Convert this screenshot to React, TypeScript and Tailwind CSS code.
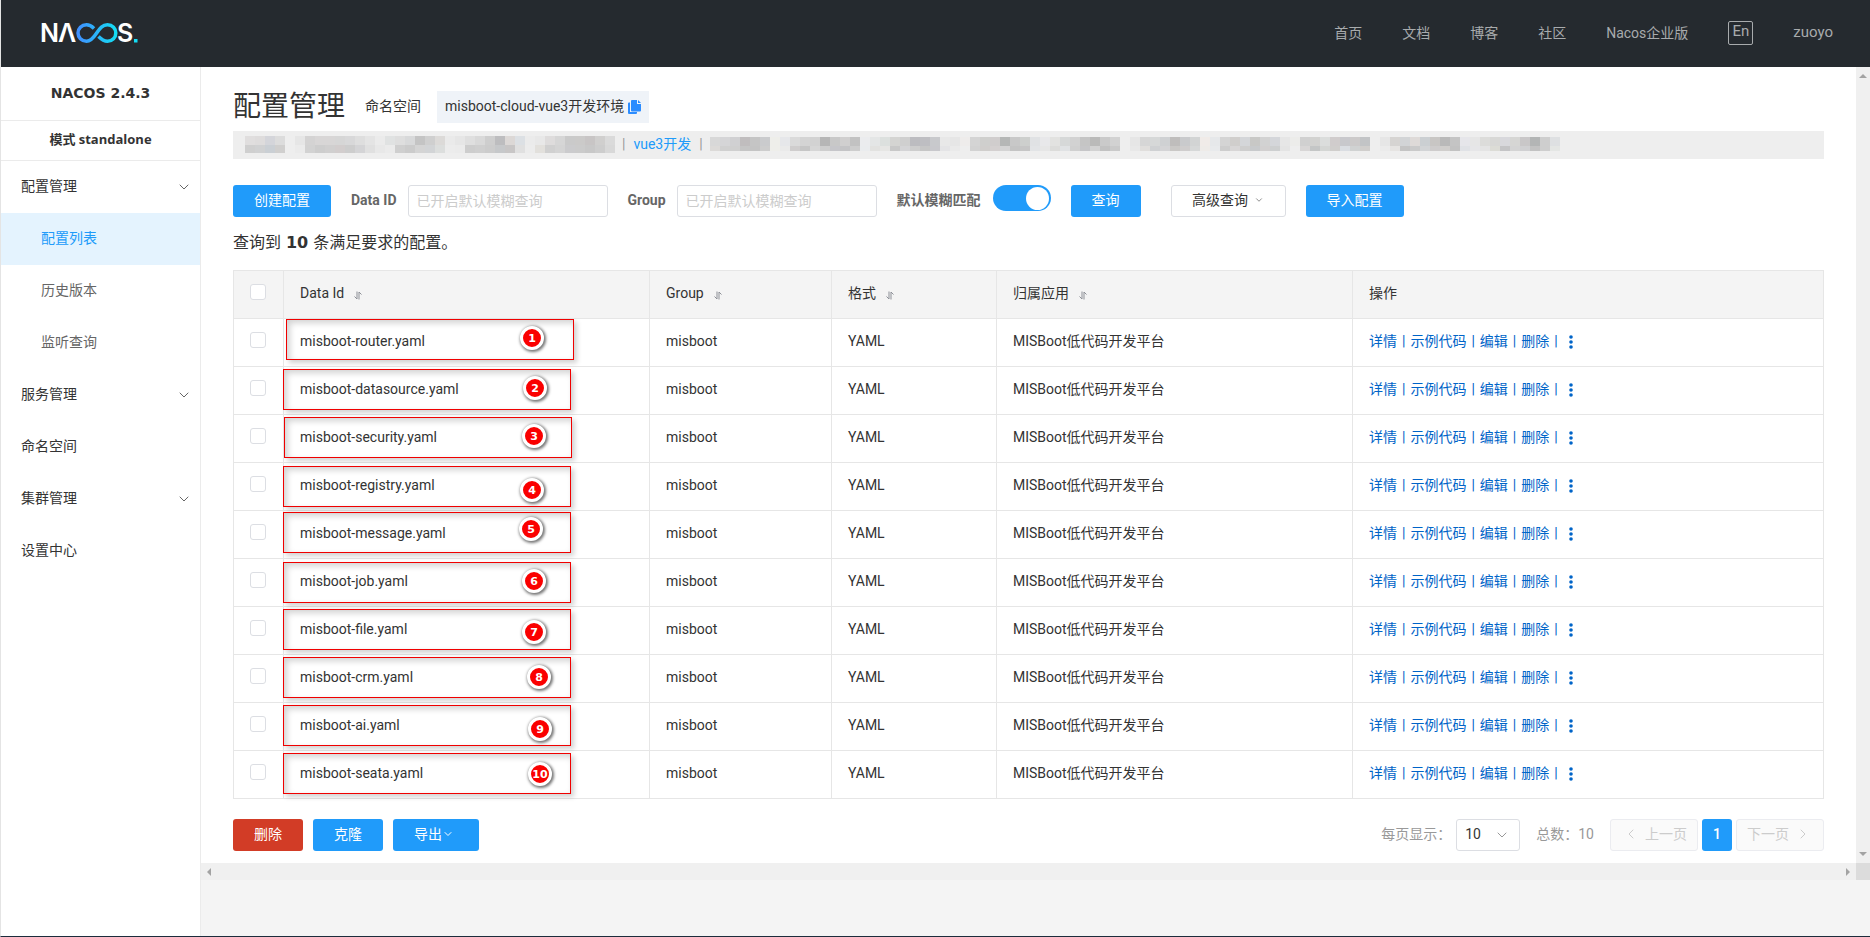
import { ChevronDown, ChevronLeft, ChevronRight } from "lucide-react";

const navLinks = ["首页", "文档", "博客", "社区", "Nacos企业版"];

type MenuItem = { label: string; expandable?: boolean; child?: boolean; active?: boolean };

const menu: MenuItem[] = [
  { label: "配置管理", expandable: true },
  { label: "配置列表", child: true, active: true },
  { label: "历史版本", child: true },
  { label: "监听查询", child: true },
  { label: "服务管理", expandable: true },
  { label: "命名空间" },
  { label: "集群管理", expandable: true },
  { label: "设置中心" },
];

const configs = [
  "misboot-router.yaml",
  "misboot-datasource.yaml",
  "misboot-security.yaml",
  "misboot-registry.yaml",
  "misboot-message.yaml",
  "misboot-job.yaml",
  "misboot-file.yaml",
  "misboot-crm.yaml",
  "misboot-ai.yaml",
  "misboot-seata.yaml",
];

// Callouts laid over the table: frame corner and badge centre, from the table's corner.
const callouts = [
  { x: 53, y: 49, bx: 299, by: 68 },
  { x: 50, y: 99, bx: 302, by: 118 },
  { x: 51, y: 147, bx: 301, by: 166 },
  { x: 50, y: 196, bx: 299, by: 220 },
  { x: 50, y: 242, bx: 298, by: 259 },
  { x: 50, y: 292, bx: 301, by: 311 },
  { x: 50, y: 339, bx: 301, by: 362 },
  { x: 50, y: 387, bx: 306, by: 407 },
  { x: 50, y: 435, bx: 307, by: 459 },
  { x: 50, y: 483, bx: 307, by: 504 },
];

const hiddenBefore = [
  "e0dede dedcdc d4d5da dcdcdc eeeeee e6e6e6 d4d3d3 d8d6d6 d8d6d6 d6d6d6 d8d8d9 dedede e4e4e4 ebebeb e0e2e2 dedede d8d9da c4c4c4 cfcfcf dcdad8 eaeaea e6e6e6 dfdfdf d9d9d9 cecece bdbdbf dcd8d6 dce0e4 ebebeb e8e8e8 dedcdc d6d6d6 cacaca cbcac9 c8c5c5 d0cfce dadada",
  "cfcfcf d0d1d2 cacfd4 d0cfce eeeeee ebebeb d2d2d2 cdcdcd d0cfcf d2cdcd cdcdcd d4d4d6 e0e0e0 e8e8e8 ebebeb cfcfcf cbcbcb d4d4d4 d2d4d6 dcdedd ececec ebebeb cdcdcd cfcfcf cccccc c6c8ca c8c6c6 e0e0e0 ececec e2e0dc d0d0d0 d4d4d4 cbcbcd cbcbcb c8c8c8 cdcdcd d8d8d8",
];

const hiddenAfter = [
  "d8d8d8 d5d5d7 d0d0d2 c0bdbe c5c5c5 cacbcd eeeeea e6e7ea dadada d4d4d4 d2d2d2 b6b6b6 c8c8c8 d0cfcf c2c2c2 ebecee e4e6e6 dce0de d4d4d2 cfcfcf bcbcc0 bebec2 c8c9cc e8e8e8 e6e6e6 eeeceb d4d4d4 cfcfcd d0cdcd b5b7b6 c8c8c8 cdcfcd e0e2e4 e8e8ea e2e2e0 d6d8d8 d2d2d2 c5c5c5 babab9 cacaca d2d2d2 eeeeee e6e6e6 d6d6d6 d6d8d8 cfd1d3 bfbdbc c9cacc d2d4d4 f0ebe8 e6e8ea d4d4d4 d0cecc d4d6d9 c8c8c6 d2d2d2 d4d6da e6e6e6 ececea d0d0d0 d2d2d0 dbdddc d0cccc c8c8cc cccaca c2c4c6 eeeeee e6e6e6 d6d4d2 d2d4d6 dedad8 cbcfd2 c8c6c4 b9b9b9 c4c4c4 e6e6ea e6e6e6 dcdcda d8d8d6 d8d8dc d6d6d4 c9c7c8 b3b5b5 cecece dee0e2",
  "dcdad8 d0d0d0 cfcfcf c5c5c5 c4c4c4 cdcdcd eeeeea eaeaea cfcdcd c6c6c6 d6d6d6 cecece c6c6ca c4c4c6 cdcdcd eaecee e2e2e0 e6e6e4 c8c8c8 d4d4d6 cdcdcd c6c6c6 c8c8cc e4e4e6 eaeaea eeeeee d2d2d2 d0cecc d4d0d0 d4d4d4 c4c4c4 c6c6c6 e2e4e6 e6e6e6 dcdcda e0e2e4 d0d0d0 c6c6c8 d2d2d2 c2c2c2 cacaca eeeeee e8e8e8 e0dedc cfd1d3 d4d4d6 cac8c6 cfcdcd d6d8d8 eeebe8 e8eaec cdcdcd d8d6d6 cecece c8cacc d2d0d0 cdcfd0 e4e4e4 eeeeee d8d6d6 c4c6c6 d4d6d4 d0cecc dadde2 d0d2d2 d0cecc eeeeee ebebeb e6e4e2 c4c4c4 cacaca d2d4d6 cecccc d0cecc c2c2c2 e0e2e6 e6e6e8 e4e4e4 dcdcd6 c4c4c6 d4d4d4 d0d0d2 c2c2c2 cecece e4e6e4",
];

function Mosaic({ rows, top, bottom }: { rows: string[]; top: number; bottom: number }) {
  const cells = rows.map((r) => r.split(" "));
  const width = cells[0].length * 10;
  const height = top + bottom;
  return (
    <svg width={width} height={height} viewBox={`0 0 ${width} ${height}`} shapeRendering="crispEdges" className="shrink-0" aria-hidden="true">
      {cells.map((row, r) =>
        row.map((c, i) => (
          <rect key={`${r}-${i}`} x={i * 10} y={r ? top : 0} width="10" height={r ? bottom : top} fill={`#${c}`} />
        ))
      )}
    </svg>
  );
}

function Logo() {
  return (
    <svg width="104" height="40" viewBox="-4 -7 104 40" role="img" aria-label="NACOS">
      <defs>
        <linearGradient id="loop" x1="0" x2="1" y1="0" y2="0">
          <stop offset="0" stopColor="#4090ff" />
          <stop offset="1" stopColor="#14dcf4" />
        </linearGradient>
      </defs>
      <g fill="#fff" fontFamily="Inter, sans-serif" fontWeight="600" fontSize="25">
        <text x="-1" y="22">N</text>
        <text x="17" y="22">Λ</text>
        <text x="76" y="22">S</text>
      </g>
      <path
        d="M53 8.500C50.500 6 48.500 4.800 45.500 4.800C40.500 4.800 37 8.500 37 13C37 17.500 40.500 21.200 45.500 21.200C49.500 21.200 52 18.500 55.500 13.200C59 8 61.500 4.800 66.500 4.800C71.500 4.800 74.800 8.500 74.800 13C74.800 17.500 71.500 21.200 66.500 21.200C63 21.200 60.500 19.500 57.500 16.500"
        fill="none"
        stroke="url(#loop)"
        strokeWidth="3.500"
      />
      <rect x="93" y="19" width="3.500" height="3.500" fill="#14dcf4" />
    </svg>
  );
}

function SortIcon() {
  return (
    <svg width="8" height="9" viewBox="0 0 8 9" fill="none" stroke="#8c8f96" aria-hidden="true">
      <path d="M3 0.500V8L0.500 5.500M5 8.500V1L7.500 3.500" />
    </svg>
  );
}

function CopyIcon() {
  return (
    <svg width="13" height="14" viewBox="0 0 13 14" aria-hidden="true">
      <path d="M4 0h5v4h4v6.500a1 1 0 0 1-1 1H4a1 1 0 0 1-1-1V1a1 1 0 0 1 1-1Z" fill="#2b8cff" />
      <path d="M10 0l3 3h-3Z" fill="#2b8cff" />
      <path d="M0 3.500a1 1 0 0 1 1-1h1v9.500h7v1a1 1 0 0 1-1 1H1a1 1 0 0 1-1-1Z" fill="#2b8cff" />
    </svg>
  );
}

function Check({ label }: { label: string }) {
  return (
    <input
      type="checkbox"
      aria-label={label}
      className="block size-4 appearance-none rounded-[3px] border border-[#dcdee3] bg-white"
    />
  );
}

function Th({ children }: { children: string }) {
  return (
    <th className="border-r border-b border-[#e6e6e6] px-4 pb-[3px] text-left font-normal">
      <span className="flex items-center gap-[10px]">
        {children}
        <button type="button" aria-label={`${children} 排序`} className="mt-1">
          <SortIcon />
        </button>
      </span>
    </th>
  );
}

function Actions() {
  return (
    <div className="flex items-center gap-[5px] text-[#0064c8]">
      {["详情", "示例代码", "编辑", "删除"].map((a) => (
        <span key={a} className="flex items-center gap-[5px]">
          <a href="#">{a}</a>
          <span>|</span>
        </span>
      ))}
      <button type="button" aria-label="更多" className="mt-[2px] ml-[6px]">
        <svg width="4" height="14" viewBox="0 0 4 14" fill="#0064c8" aria-hidden="true">
          <circle cx="2" cy="2" r="1.800" />
          <circle cx="2" cy="7" r="1.800" />
          <circle cx="2" cy="12" r="1.800" />
        </svg>
      </button>
    </div>
  );
}

const primary = "h-8 rounded-[3px] bg-[#209bfa] pb-[2px] text-white";
const field = "h-8 w-[200px] rounded-[3px] border border-[#dcdee3] px-2 placeholder:text-[#ccc] outline-none";

export default function App() {
  return (
    <div className="flex min-h-screen flex-col border-b border-l border-b-[#1c2c3c] border-l-[#e4e4e4] bg-[#f4f4f4] font-[Roboto,'Noto_Sans_CJK_SC',sans-serif] text-sm text-[#333]">
      <header className="flex h-[67px] items-center justify-between bg-[#252a2f] pr-[37px] pb-[2px] pl-9 text-[#a8abad]">
        <a href="#">
          <Logo />
        </a>
        <nav className="flex items-center gap-10">
          {navLinks.map((l) => (
            <a key={l} href="#">
              {l}
            </a>
          ))}
          <button type="button" className="flex h-6 w-[25px] items-center justify-center rounded-xs border border-[#a8abad] pb-[2px] text-[15px]">
            En
          </button>
          <a href="#" className="text-[15px]">
            zuoyo
          </a>
        </nav>
      </header>

      <div className="flex flex-1">
        <aside className="w-[200px] shrink-0 border-r border-[#ebebeb] bg-white">
          <h3 className="flex h-[54px] items-center justify-center border-b border-[#ebebeb] pb-[2px] font-['DejaVu_Sans','Noto_Sans_CJK_SC',sans-serif] text-sm font-bold">
            NACOS 2.4.3
          </h3>
          <h3 className="flex h-10 items-center justify-center border-b border-[#ebebeb] pb-[2px] font-['Open_Sans','Noto_Sans_CJK_SC',sans-serif] text-[13px] font-bold">
            模式 standalone
          </h3>
          <ul>
            {menu.map((m) => (
              <li key={m.label}>
                <a
                  href="#"
                  className={
                    m.active
                      ? "flex h-[52px] items-center bg-[#e4f3fe] pb-[2px] pl-10 text-[#209bfa]"
                      : m.child
                        ? "flex h-[52px] items-center pb-[2px] pl-10 text-[#666]"
                        : "flex h-[52px] items-center justify-between pr-2 pb-[2px] pl-5"
                  }
                >
                  {m.label}
                  {m.expandable && <ChevronDown size={16} strokeWidth={1.5} className="mt-[2px] text-[#666]" />}
                </a>
              </li>
            ))}
          </ul>
        </aside>

        <div className="flex min-w-0 flex-1 flex-col">
          <div className="flex">
            <main className="min-w-0 flex-1 bg-white px-8 pt-6 pb-3">
              <div className="flex h-8 items-center">
                <h1 className="text-[28px] leading-8">配置管理</h1>
                <span className="ml-5 pb-[2px]">命名空间</span>
                <span className="ml-4 flex h-8 items-center gap-1 bg-[#eff3f8] px-2 pb-[2px]">
                  misboot-cloud-vue3开发环境
                  <button type="button" aria-label="复制" className="mt-[2px]">
                    <CopyIcon />
                  </button>
                </span>
              </div>

              <div className="mt-2 flex h-7 items-center overflow-hidden bg-[#eee] pb-[2px] pl-3">
                <Mosaic rows={hiddenBefore} top={9} bottom={8} />
                <span className="ml-[7px] text-[#999]">|</span>
                <a href="#" className="mx-2 whitespace-nowrap text-[#209bfa]">
                  vue3开发
                </a>
                <span className="mr-[7px] text-[#999]">|</span>
                <Mosaic rows={hiddenAfter} top={9} bottom={5} />
              </div>

              <form className="mt-[26px] flex items-center gap-5" onSubmit={(e) => e.preventDefault()}>
                <button type="button" className={`${primary} w-[98px]`}>
                  创建配置
                </button>
                <div className="flex items-center gap-[11px]">
                  <label htmlFor="dataId" className="pb-[2px] font-bold text-[#666]">
                    Data ID
                  </label>
                  <input id="dataId" placeholder="已开启默认模糊查询" className={field} />
                </div>
                <div className="flex items-center gap-[11px]">
                  <label htmlFor="group" className="pb-[2px] font-bold text-[#666]">
                    Group
                  </label>
                  <input id="group" placeholder="已开启默认模糊查询" className={field} />
                </div>
                <div className="flex h-8 gap-3">
                  <label htmlFor="fuzzy" className="self-center pb-[2px] font-bold text-[#666]">
                    默认模糊匹配
                  </label>
                  <input
                    id="fuzzy"
                    type="checkbox"
                    role="switch"
                    defaultChecked
                    className="flex h-[26px] w-[58px] appearance-none items-center rounded-full bg-[#ccc] px-[2px] before:block before:size-[23px] before:rounded-full before:bg-white checked:justify-end checked:bg-[#209bfa]"
                  />
                </div>
                <button type="submit" className={`${primary} w-[70px]`}>
                  查询
                </button>
                <button type="button" className="ml-[10px] flex h-8 w-[115px] items-center justify-center gap-[6px] rounded-[3px] border border-[#dcdee3] pb-[2px]">
                  高级查询
                  <ChevronDown size={10} strokeWidth={2} className="text-[#777]" />
                </button>
                <button type="button" className={`${primary} w-[98px]`}>
                  导入配置
                </button>
              </form>

              <p className="mt-[14px] text-base leading-6">
                查询到 <strong className="px-px font-['DejaVu_Sans',sans-serif] text-base font-bold">10</strong> 条满足要求的配置。
              </p>

              <div className="relative mt-[15px]">
                <table className="w-full table-fixed border-separate border-spacing-0 border-t border-l border-[#e6e6e6]">
                  <colgroup>
                    <col className="w-[50px]" />
                    <col className="w-[366px]" />
                    <col className="w-[182px]" />
                    <col className="w-[165px]" />
                    <col className="w-[356px]" />
                    <col />
                  </colgroup>
                  <thead>
                    <tr className="h-12 bg-[#f4f4f4]">
                      <th className="border-r border-b border-[#e6e6e6] pb-[6px] pl-4">
                        <Check label="全选" />
                      </th>
                      <Th>Data Id</Th>
                      <Th>Group</Th>
                      <Th>格式</Th>
                      <Th>归属应用</Th>
                      <th className="border-r border-b border-[#e6e6e6] px-4 pb-[3px] text-left font-normal">操作</th>
                    </tr>
                  </thead>
                  <tbody>
                    {configs.map((name) => (
                      <tr key={name} className="h-12">
                        <td className="border-r border-b border-[#e6e6e6] px-4 pb-[6px]">
                          <Check label={name} />
                        </td>
                        <td className="border-r border-b border-[#e6e6e6] px-4 pb-[3px]">{name}</td>
                        <td className="border-r border-b border-[#e6e6e6] px-4 pb-[3px]">misboot</td>
                        <td className="border-r border-b border-[#e6e6e6] px-4 pb-[3px]">YAML</td>
                        <td className="border-r border-b border-[#e6e6e6] px-4 pb-[3px]">MISBoot低代码开发平台</td>
                        <td className="border-r border-b border-[#e6e6e6] px-4 pb-[3px]">
                          <Actions />
                        </td>
                      </tr>
                    ))}
                  </tbody>
                </table>
                {callouts.map((c, i) => (
                  <div key={i} className="pointer-events-none">
                    <div
                      className="absolute h-[41px] w-[288px] border border-[#f00000] shadow-[3px_3px_5px_rgba(0,0,0,0.18),inset_3px_3px_6px_rgba(0,0,0,0.18)]"
                      style={{ left: c.x, top: c.y }}
                    />
                    <span
                      className="absolute flex size-6 -translate-1/2 items-center justify-center rounded-full border-[3px] border-white bg-[#fa0000] font-['DejaVu_Sans',sans-serif] text-[11px] leading-none font-bold text-white shadow-[1px_1px_3px_1px_rgba(0,0,0,0.55)]"
                      style={{ left: c.bx, top: c.by }}
                    >
                      {i + 1}
                    </span>
                  </div>
                ))}
              </div>

              <div className="mt-5 flex items-center justify-between">
                <div className="flex gap-[10px]">
                  <button type="button" className="h-8 w-[70px] rounded-[3px] bg-[#d23c26] pb-[2px] text-white">
                    删除
                  </button>
                  <button type="button" className={`${primary} w-[70px]`}>
                    克隆
                  </button>
                  <button type="button" className={`${primary} flex w-[86px] items-center pl-[21px]`}>
                    导出
                    <ChevronDown size={12} strokeWidth={2} />
                  </button>
                </div>
                <div className="flex items-center text-[#999]">
                  <label htmlFor="pageSize" className="pb-[2px]">
                    每页显示：
                  </label>
                  <span className="relative ml-[5px]">
                    <select id="pageSize" className="block h-8 w-16 appearance-none rounded-[3px] border border-[#dcdee3] bg-white px-2 pb-[2px] text-[#333]">
                      <option>10</option>
                      <option>20</option>
                      <option>50</option>
                    </select>
                    <ChevronDown size={16} strokeWidth={1.5} className="pointer-events-none absolute top-2 right-[10px]" />
                  </span>
                  <span className="mr-4 ml-4 pb-[2px]">总数：10</span>
                  <div className="flex gap-1">
                    <button type="button" disabled className="flex h-8 w-[88px] items-center justify-center gap-[6px] rounded-[3px] border border-[#ebecf0] bg-[#fafafa] pb-[2px] pl-[2px] text-[#ccc]">
                      <ChevronLeft size={16} strokeWidth={1.5} />
                      上一页
                    </button>
                    <button type="button" className={`${primary} w-[30px] font-medium`}>
                      1
                    </button>
                    <button type="button" disabled className="flex h-8 w-[88px] items-center justify-center gap-[6px] rounded-[3px] border border-[#ebecf0] bg-[#fafafa] pr-[2px] pb-[2px] text-[#ccc]">
                      下一页
                      <ChevronRight size={16} strokeWidth={1.5} />
                    </button>
                  </div>
                </div>
              </div>
            </main>
            <div className="flex w-[14px] flex-col items-center justify-between bg-[#f0f0f0] py-[7px]" aria-hidden="true">
              <svg width="8" height="4" viewBox="0 0 8 4" fill="#a3a3a3">
                <path d="M0 4L4 0L8 4Z" />
              </svg>
              <svg width="8" height="4" viewBox="0 0 8 4" fill="#a3a3a3">
                <path d="M0 0L4 4L8 0Z" />
              </svg>
            </div>
          </div>
          <div className="flex h-[17px]" aria-hidden="true">
            <div className="flex flex-1 items-center justify-between bg-[#f0f0f0] px-[6px]">
              <svg width="4" height="8" viewBox="0 0 4 8" fill="#a3a3a3">
                <path d="M4 0L0 4L4 8Z" />
              </svg>
              <svg width="4" height="8" viewBox="0 0 4 8" fill="#a3a3a3">
                <path d="M0 0L4 4L0 8Z" />
              </svg>
            </div>
            <div className="w-[14px] bg-[#dcdcdc]" />
          </div>
        </div>
      </div>
    </div>
  );
}
